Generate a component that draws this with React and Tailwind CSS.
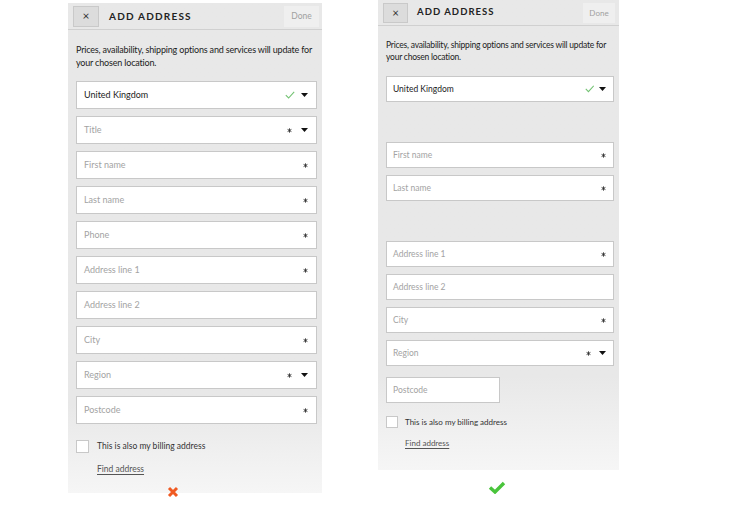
import React from "react";

const Tri = ({ w = 7, h = 4 }) => (
  <svg width={w} height={h} viewBox="0 0 7 4" className="block">
    <polygon points="0,0 7,0 3.5,4" fill="#111" />
  </svg>
);

const Star = ({ cls = "" }) => (
  <svg width="5" height="5" viewBox="0 0 6 6" className={"block " + cls}>
    <path d="M3 0.4 V5.6 M0.7 1.7 L5.3 4.3 M0.7 4.3 L5.3 1.7" stroke="#333" strokeWidth="1.1" />
  </svg>
);

const ThinCheck = ({ w = 10 }) => (
  <svg width={w} height={w * 0.8} viewBox="0 0 10 8" className="block">
    <polyline points="0.8,4.2 3.6,7 9.2,0.8" fill="none" stroke="#72c272" strokeWidth="1.1" />
  </svg>
);

function FieldL({ label, value, star, tri, check, cls = "" }) {
  return (
    <div className={"h-[28px] bg-white border border-[#c8c8c8] flex items-center pl-[7px] pr-[8px] " + cls}>
      <span className={value ? "text-[#222] text-[9px]" : "text-[#a3a3a3] text-[9px]"}>{value || label}</span>
      <div className="ml-auto flex items-center">
        {check && <span className="mr-[6px]"><ThinCheck w={10} /></span>}
        {star && <Star cls={"mt-[1px] " + (tri ? "mr-[9px]" : "mr-[0px]")} />}
        {tri && <Tri />}
      </div>
    </div>
  );
}

function FieldR({ label, value, star, tri, check, cls = "" }) {
  return (
    <div className={"h-[26px] bg-white border border-[#c8c8c8] flex items-center pl-[6px] pr-[7px] " + cls}>
      <span className={value ? "text-[#222] text-[8.5px]" : "text-[#a3a3a3] text-[8.5px]"}>{value || label}</span>
      <div className="ml-auto flex items-center">
        {check && <span className="mr-[5px]"><ThinCheck w={9.5} /></span>}
        {star && <Star cls={"mt-[1px] " + (tri ? "mr-[8px]" : "mr-[0px]")} />}
        {tri && <Tri />}
      </div>
    </div>
  );
}

export default function App() {
  return (
    <div className="w-[730px] h-[505px] bg-white flex items-start relative overflow-hidden" style={{ fontFamily: "Lato, 'Open Sans', sans-serif" }}>
      {/* Left column */}
      <div className="ml-[68px] mt-[3px] w-[254px] flex flex-col">
        <div className="h-[490px] bg-gradient-to-b from-[#e8e8e8] via-[#e8e8e8] via-[82%] to-[#f6f6f6] flex flex-col">
          <div className="h-[27px] flex items-center px-[5px] border-b border-[#d0d0d0]">
            <div className="w-[26px] h-[21px] bg-[#dcdcdc] border border-[#c9c9c9] flex items-center justify-center text-[#333] text-[12px] leading-none">×</div>
            <div className="ml-[10px] text-[10px] font-bold tracking-[0.12em] text-[#222]">ADD ADDRESS</div>
            <div className="ml-auto mr-[-2px] w-[35px] h-[21px] bg-[#efefef] flex items-center justify-center text-[8.5px] text-[#a0a0a0]">Done</div>
          </div>
          <div className="pl-[8px] pr-[5px] pt-[13px]">
            <p className="text-[9px] leading-[13px] text-[#222] tracking-[-0.02em]">Prices, availability, shipping options and services will update for your chosen location.</p>
            <div className="mt-[12px] flex flex-col gap-[7px]">
              <FieldL value="United Kingdom" check tri />
              <FieldL label="Title" star tri />
              <FieldL label="First name" star />
              <FieldL label="Last name" star />
              <FieldL label="Phone" star />
              <FieldL label="Address line 1" star />
              <FieldL label="Address line 2" />
              <FieldL label="City" star />
              <FieldL label="Region" star tri />
              <FieldL label="Postcode" star />
            </div>
            <div className="mt-[16px] flex items-center">
              <div className="w-[13px] h-[13px] bg-white border border-[#c8c8c8]" />
              <span className="ml-[8px] text-[8.5px] text-[#333]">This is also my billing address</span>
            </div>
            <div className="mt-[10px] ml-[21px] text-[8.5px] text-[#555] underline underline-offset-2">Find address</div>
          </div>
        </div>
        <div className="relative -mt-[7px] ml-[99px] w-[12px] h-[12px]">
          <svg width="12" height="12" viewBox="0 0 12 12" className="block">
            <path d="M2 2 L10 10 M10 2 L2 10" stroke="#f05a22" strokeWidth="3" strokeLinecap="butt" />
          </svg>
        </div>
      </div>

      {/* Right column */}
      <div className="ml-[56px] w-[241px] flex flex-col">
        <div className="h-[470px] bg-gradient-to-b from-[#e8e8e8] via-[#e8e8e8] via-[80%] to-[#f6f6f6] flex flex-col">
          <div className="h-[26px] flex items-center px-[5px] border-b border-[#d0d0d0]">
            <div className="w-[25px] h-[20px] bg-[#dcdcdc] border border-[#c9c9c9] flex items-center justify-center text-[#333] text-[11.5px] leading-none">×</div>
            <div className="ml-[9px] text-[9.5px] font-bold tracking-[0.11em] text-[#222]">ADD ADDRESS</div>
            <div className="ml-auto mr-[-1px] w-[32px] h-[20px] bg-[#efefef] flex items-center justify-center text-[8px] text-[#a0a0a0]">Done</div>
          </div>
          <div className="pl-[8px] pr-[5px] pt-[13px]">
            <p className="text-[8.5px] leading-[12px] text-[#222] tracking-[-0.025em]">Prices, availability, shipping options and services will update for your chosen location.</p>
            <div className="mt-[13px] flex flex-col gap-[7px]">
              <FieldR value="United Kingdom" check tri />
              <div className="h-[26px]" />
              <FieldR label="First name" star />
              <FieldR label="Last name" star />
              <div className="h-[26px]" />
              <FieldR label="Address line 1" star />
              <FieldR label="Address line 2" />
              <FieldR label="City" star />
              <FieldR label="Region" star tri />
              <FieldR label="Postcode" cls="w-[114px] mt-[4px]" />
            </div>
            <div className="mt-[13px] flex items-center">
              <div className="w-[12px] h-[12px] bg-white border border-[#c8c8c8]" />
              <span className="ml-[7px] text-[8px] text-[#333]">This is also my billing address</span>
            </div>
            <div className="mt-[9px] ml-[19px] text-[8px] text-[#555] underline underline-offset-2">Find address</div>
          </div>
        </div>
        <div className="mt-[11px] ml-[110px] w-[18px] h-[13px]">
          <svg width="18" height="13" viewBox="0 0 18 13" className="block">
            <path d="M2 6.5 L7 11 L16 2" fill="none" stroke="#49c43b" strokeWidth="3.4" strokeLinecap="butt" strokeLinejoin="miter" />
          </svg>
        </div>
      </div>
    </div>
  );
}
